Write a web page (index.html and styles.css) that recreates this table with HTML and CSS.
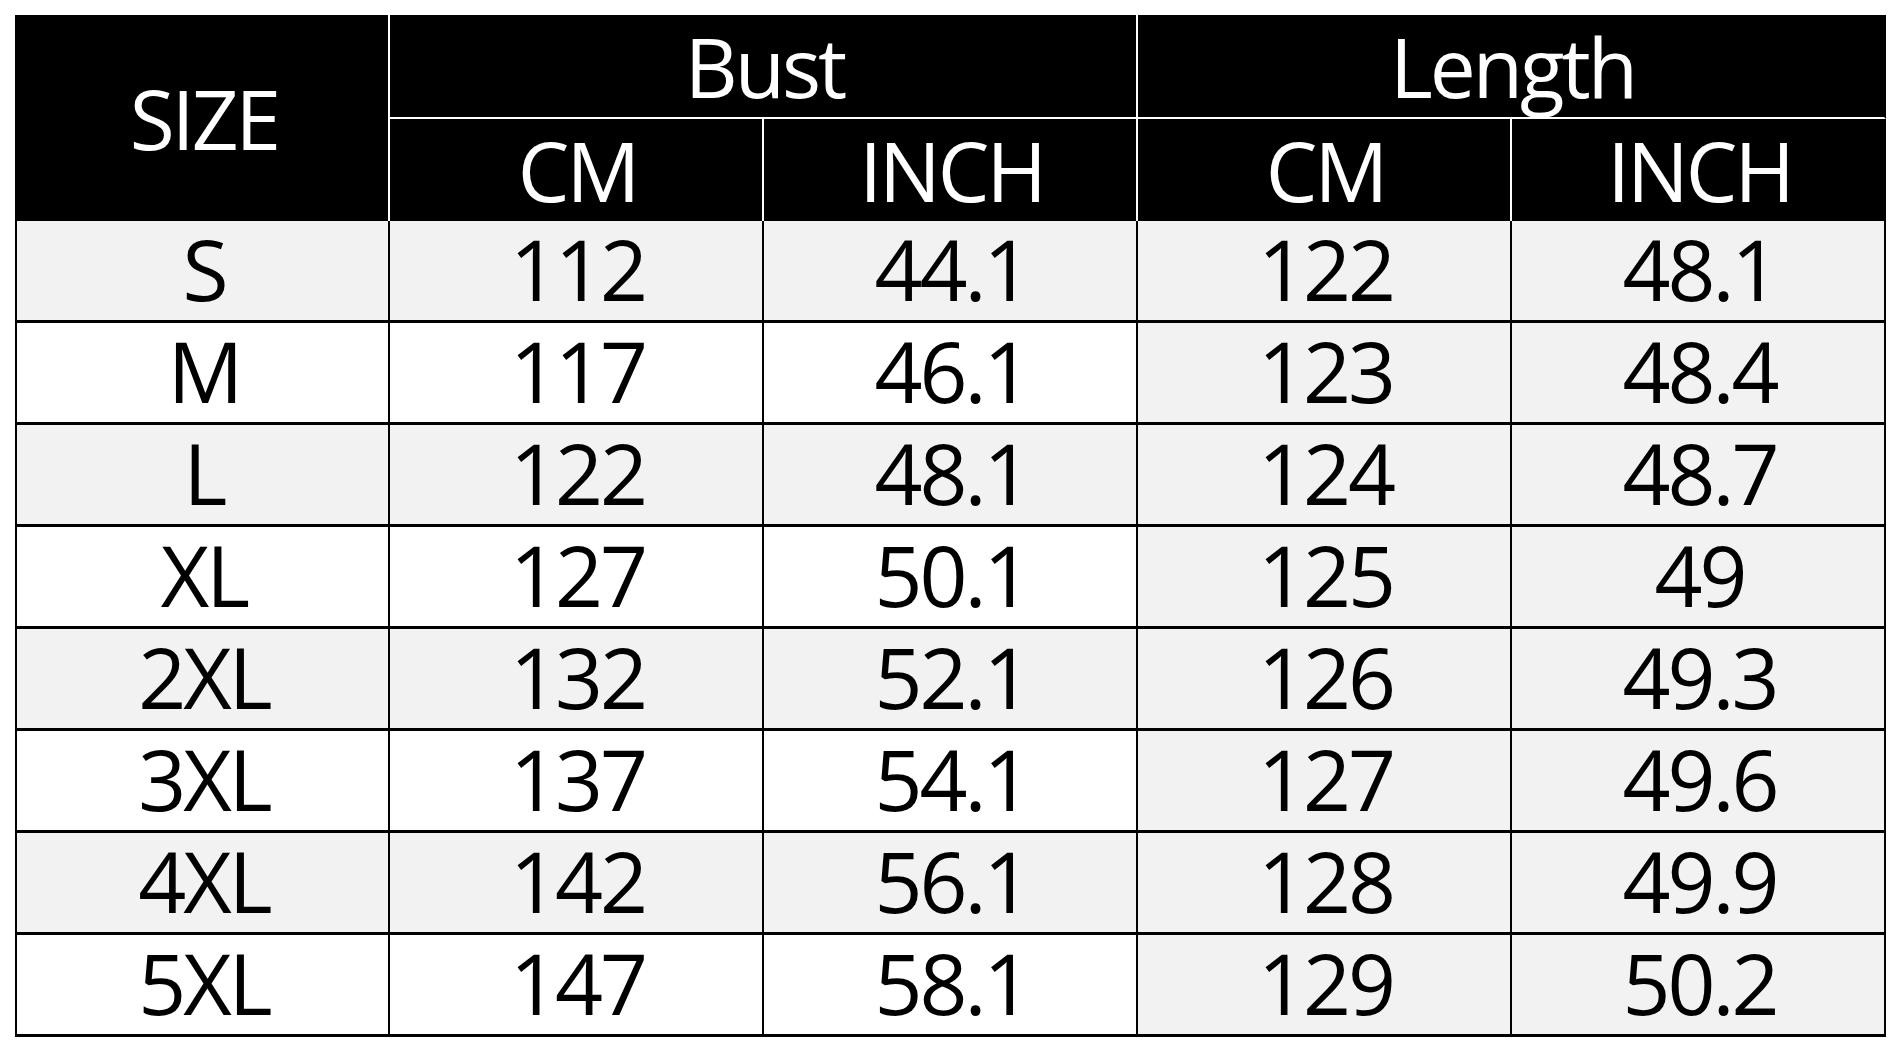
FILE: index.html
```html
<!DOCTYPE html>
<html lang="en">
<head>
<meta charset="utf-8">
<title>Size Chart</title>
<link rel="stylesheet" href="styles.css">
</head>
<body>
<table class="size-table">
  <colgroup>
    <col class="col-first">
    <col class="col">
    <col class="col">
    <col class="col">
    <col class="col">
  </colgroup>
  <thead>
    <tr class="head-top">
      <th class="h-size" rowspan="2">SIZE</th>
      <th class="h-group" colspan="2">Bust</th>
      <th class="h-group h-last" colspan="2">Length</th>
    </tr>
    <tr class="head-sub">
      <th class="h-unit">CM</th>
      <th class="h-unit">INCH</th>
      <th class="h-unit">CM</th>
      <th class="h-unit h-last">INCH</th>
    </tr>
  </thead>
  <tbody>
    <tr class="odd"><td>S</td><td>112</td><td>44.1</td><td class="len">122</td><td class="len">48.1</td></tr>
    <tr class="even"><td>M</td><td>117</td><td>46.1</td><td class="len">123</td><td class="len">48.4</td></tr>
    <tr class="odd"><td>L</td><td>122</td><td>48.1</td><td class="len">124</td><td class="len">48.7</td></tr>
    <tr class="even"><td>XL</td><td>127</td><td>50.1</td><td class="len">125</td><td class="len">49</td></tr>
    <tr class="odd"><td>2XL</td><td>132</td><td>52.1</td><td class="len">126</td><td class="len">49.3</td></tr>
    <tr class="even"><td>3XL</td><td>137</td><td>54.1</td><td class="len">127</td><td class="len">49.6</td></tr>
    <tr class="odd"><td>4XL</td><td>142</td><td>56.1</td><td class="len">128</td><td class="len">49.9</td></tr>
    <tr class="even"><td>5XL</td><td>147</td><td>58.1</td><td class="len">129</td><td class="len">50.2</td></tr>
  </tbody>
</table>
</body>
</html>
```
FILE: styles.css
```css
html, body {
  margin: 0;
  padding: 0;
  background: #ffffff;
}

body {
  padding: 15px 0 0 15px;
  font-family: "Open Sans", "Noto Sans", sans-serif;
}

.size-table {
  border-collapse: separate;
  border-spacing: 0;
  table-layout: fixed;
  width: 1871px;
}

.col-first { width: 375px; }
.col { width: 374px; }

.size-table th,
.size-table td {
  box-sizing: border-box;
  padding: 0 0 0 3px;
  text-align: center;
  vertical-align: middle;
  line-height: 1;
  white-space: nowrap;
  letter-spacing: -3px;
}

/* Header */
.size-table th {
  background: #000000;
  color: #ffffff;
  font-weight: 400;
  font-size: 82px;
  border-right: 2px solid #ffffff;
}

.size-table th.h-last {
  border-right-color: #000000;
}

.h-size {
  border-left: 2px solid #000000;
  padding-bottom: 6px;
}

.h-group {
  height: 104px;
  border-bottom: 2px solid #ffffff;
}

.h-unit {
  height: 102px;
}

/* Body */
.size-table td {
  height: 102px;
  font-size: 84px;
  color: #000000;
  border-right: 2px solid #000000;
  border-bottom: 3px solid #000000;
  padding-bottom: 3px;
}

.size-table td:first-child {
  border-left: 2px solid #000000;
}

.odd td {
  background: #f2f2f2;
}

.even td {
  background: #ffffff;
}

.even td.len {
  background: #f2f2f2;
}
```
